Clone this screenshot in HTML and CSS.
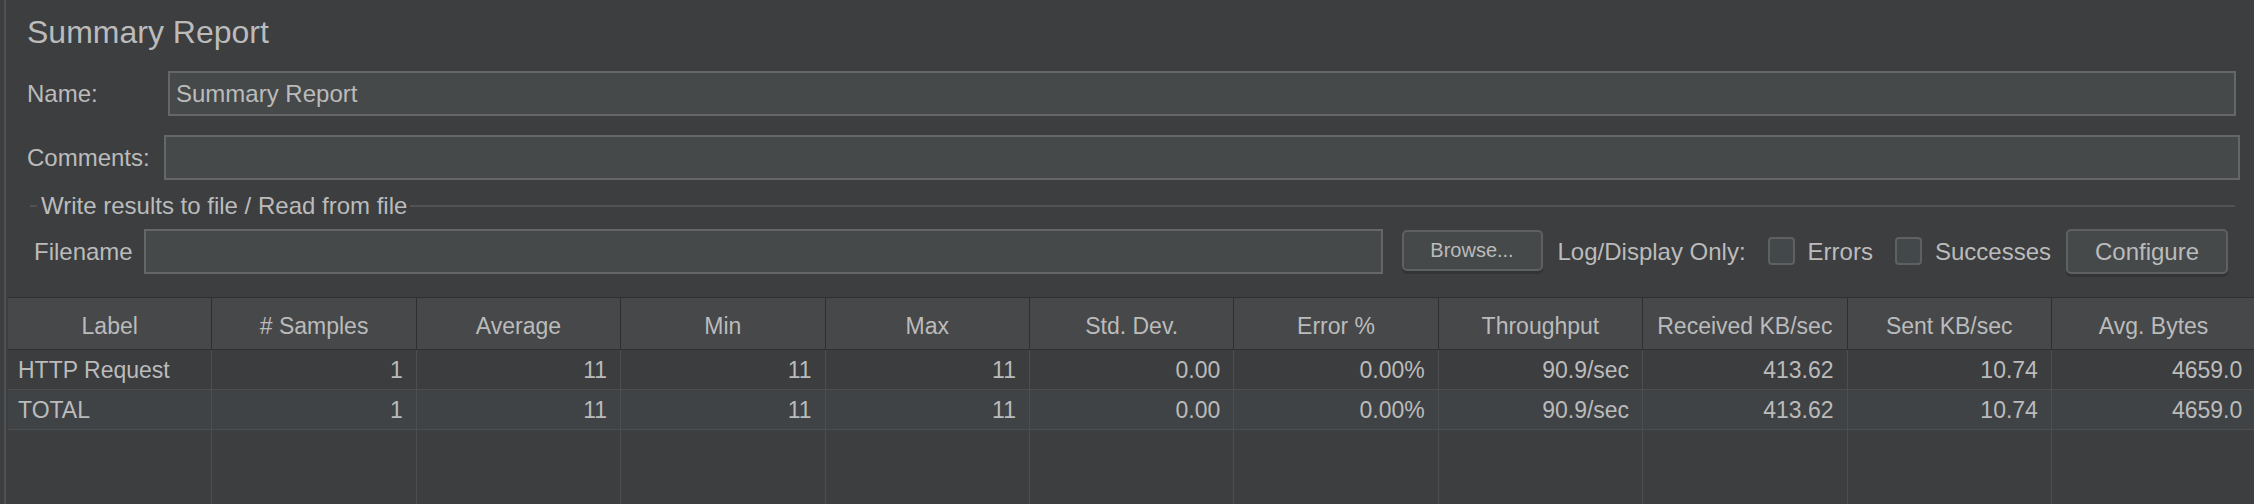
FILE: index.html
```html
<!DOCTYPE html>
<html>
<head>
<meta charset="utf-8">
<title>Summary Report</title>
<link rel="stylesheet" href="styles.css">
</head>
<body>
<div class="panel">
  <div class="form">
    <h1 class="title">Summary Report</h1>
    <div class="row row-name">
      <span class="lbl lbl-name">Name:</span>
      <div class="field field-text">Summary Report</div>
    </div>
    <div class="row row-comments">
      <span class="lbl lbl-comments">Comments:</span>
      <div class="field"></div>
    </div>
    <div class="group">
      <div class="group-title">
        <span class="dash"></span>
        <span class="gtext">Write results to file / Read from file</span>
        <span class="gline"></span>
      </div>
      <div class="file-row">
        <span class="lbl-file">Filename</span>
        <div class="field field-file"></div>
        <div class="btn btn-browse">Browse...</div>
        <span class="log-text">Log/Display Only:</span>
        <span class="cb cb-errors"></span>
        <span class="cb-label cbl-errors">Errors</span>
        <span class="cb cb-success"></span>
        <span class="cb-label cbl-success">Successes</span>
        <div class="btn btn-config">Configure</div>
      </div>
    </div>
  </div>
  <div class="table">
    <div class="thead">
      <div class="th">Label</div>
      <div class="th"># Samples</div>
      <div class="th">Average</div>
      <div class="th">Min</div>
      <div class="th">Max</div>
      <div class="th">Std. Dev.</div>
      <div class="th">Error %</div>
      <div class="th">Throughput</div>
      <div class="th">Received KB/sec</div>
      <div class="th">Sent KB/sec</div>
      <div class="th">Avg. Bytes</div>
    </div>
    <div class="tr">
      <div class="td td-label">HTTP Request</div>
      <div class="td">1</div>
      <div class="td">11</div>
      <div class="td">11</div>
      <div class="td">11</div>
      <div class="td">0.00</div>
      <div class="td">0.00%</div>
      <div class="td">90.9/sec</div>
      <div class="td">413.62</div>
      <div class="td">10.74</div>
      <div class="td">4659.0</div>
    </div>
    <div class="tr tr-alt">
      <div class="td td-label">TOTAL</div>
      <div class="td">1</div>
      <div class="td">11</div>
      <div class="td">11</div>
      <div class="td">11</div>
      <div class="td">0.00</div>
      <div class="td">0.00%</div>
      <div class="td">90.9/sec</div>
      <div class="td">413.62</div>
      <div class="td">10.74</div>
      <div class="td">4659.0</div>
    </div>
    <div class="tfill">
      <div class="tf"></div><div class="tf"></div><div class="tf"></div><div class="tf"></div>
      <div class="tf"></div><div class="tf"></div><div class="tf"></div><div class="tf"></div>
      <div class="tf"></div><div class="tf"></div><div class="tf"></div>
    </div>
  </div>
</div>
</body>
</html>
```

FILE: styles.css
```css
* { box-sizing: border-box; }
html, body {
  margin: 0;
  padding: 0;
  width: 2254px;
  height: 504px;
  overflow: hidden;
  background: #3c3e40;
}
body {
  font-family: "Liberation Sans", Arial, sans-serif;
  color: #bbbbbb;
  font-size: 24px;
}
.panel {
  margin-left: 4px;
  border-left: 2px solid #4e5052;
  height: 504px;
  display: flex;
  flex-direction: column;
}
.form {
  padding-left: 21px;
}
.title {
  margin: 0;
  padding-top: 12px;
  font-size: 32px;
  line-height: 40px;
  font-weight: normal;
  color: #bbbbbb;
}
.row {
  display: flex;
  align-items: center;
  height: 45px;
}
.row-name { margin-top: 19px; margin-right: 18px; }
.row-comments { margin-top: 19px; margin-right: 14px; }
.lbl { flex: none; line-height: 24px; }
.lbl-name { width: 141px; }
.lbl-comments { width: 137px; }
.field {
  flex: 1;
  height: 45px;
  background: #45494a;
  border: 2px solid #646668;
  line-height: 41px;
  padding-left: 6px;
  color: #bbbbbb;
}
.group-title {
  margin-top: 14px;
  height: 24px;
  display: flex;
  align-items: center;
  padding-left: 3px;
  margin-right: 19px;
}
.dash {
  width: 7px;
  height: 2px;
  background: #505254;
}
.gtext {
  margin-left: 4px;
  line-height: 24px;
  white-space: nowrap;
}
.gline {
  flex: 1;
  margin-left: 3px;
  height: 2px;
  background: #505254;
}
.file-row {
  margin-top: 11px;
  height: 45px;
  display: flex;
  align-items: center;
  padding-left: 7px;
  padding-right: 26px;
  white-space: nowrap;
}
.lbl-file { margin-right: 11px; line-height: 24px; }
.field-file { flex: 1; }
.btn {
  flex: none;
  background: #45494a;
  border: 2px solid #5e6062;
  border-radius: 5px;
  box-shadow: 0 3px 0 #333436;
  text-align: center;
  color: #bbbbbb;
}
.btn-browse {
  margin-left: 19px;
  width: 141px;
  height: 41px;
  font-size: 20px;
  line-height: 37px;
  margin-top: -2px;
}
.log-text { margin-left: 15px; line-height: 24px; }
.cb {
  flex: none;
  width: 27px;
  height: 28px;
  background: #43484a;
  border: 2px solid #5e6062;
  border-radius: 4px;
  margin-top: -2px;
}
.cb-errors { margin-left: 22px; }
.cb-success { margin-left: 22px; }
.cb-label { margin-left: 13px; line-height: 24px; }
.btn-config {
  margin-left: 15px;
  width: 162px;
  height: 45px;
  font-size: 24px;
  line-height: 41px;
}
.table {
  margin-top: 23px;
  margin-left: 2px;
  flex: 1;
  display: flex;
  flex-direction: column;
  width: 2250px;
  border-top: 1px solid #2e2f31;
}
.thead, .tr, .tfill {
  display: grid;
  grid-template-columns: repeat(11, 204.4px);
}
.thead {
  background: #46484a;
  border-bottom: 1px solid #2e2f31;
}
.th {
  height: 51px;
  padding-top: 6px;
  line-height: 45px;
  font-size: 23px;
  text-align: center;
  border-right: 1px solid #2e2f31;
  white-space: nowrap;
}
.tr {
  background: #3c3d3f;
}
.tr-alt {
  background: #404346;
}
.td {
  height: 40px;
  padding-top: 2px;
  line-height: 37px;
  font-size: 23px;
  text-align: right;
  padding-right: 13px;
  border-right: 1px solid #4c4e50;
  border-bottom: 1px solid #4c4e50;
  white-space: nowrap;
}
.td-label {
  text-align: left;
  padding-left: 10px;
  padding-right: 0;
}
.tfill {
  flex: 1;
}
.tf {
  border-right: 1px solid #4c4e50;
}
```
